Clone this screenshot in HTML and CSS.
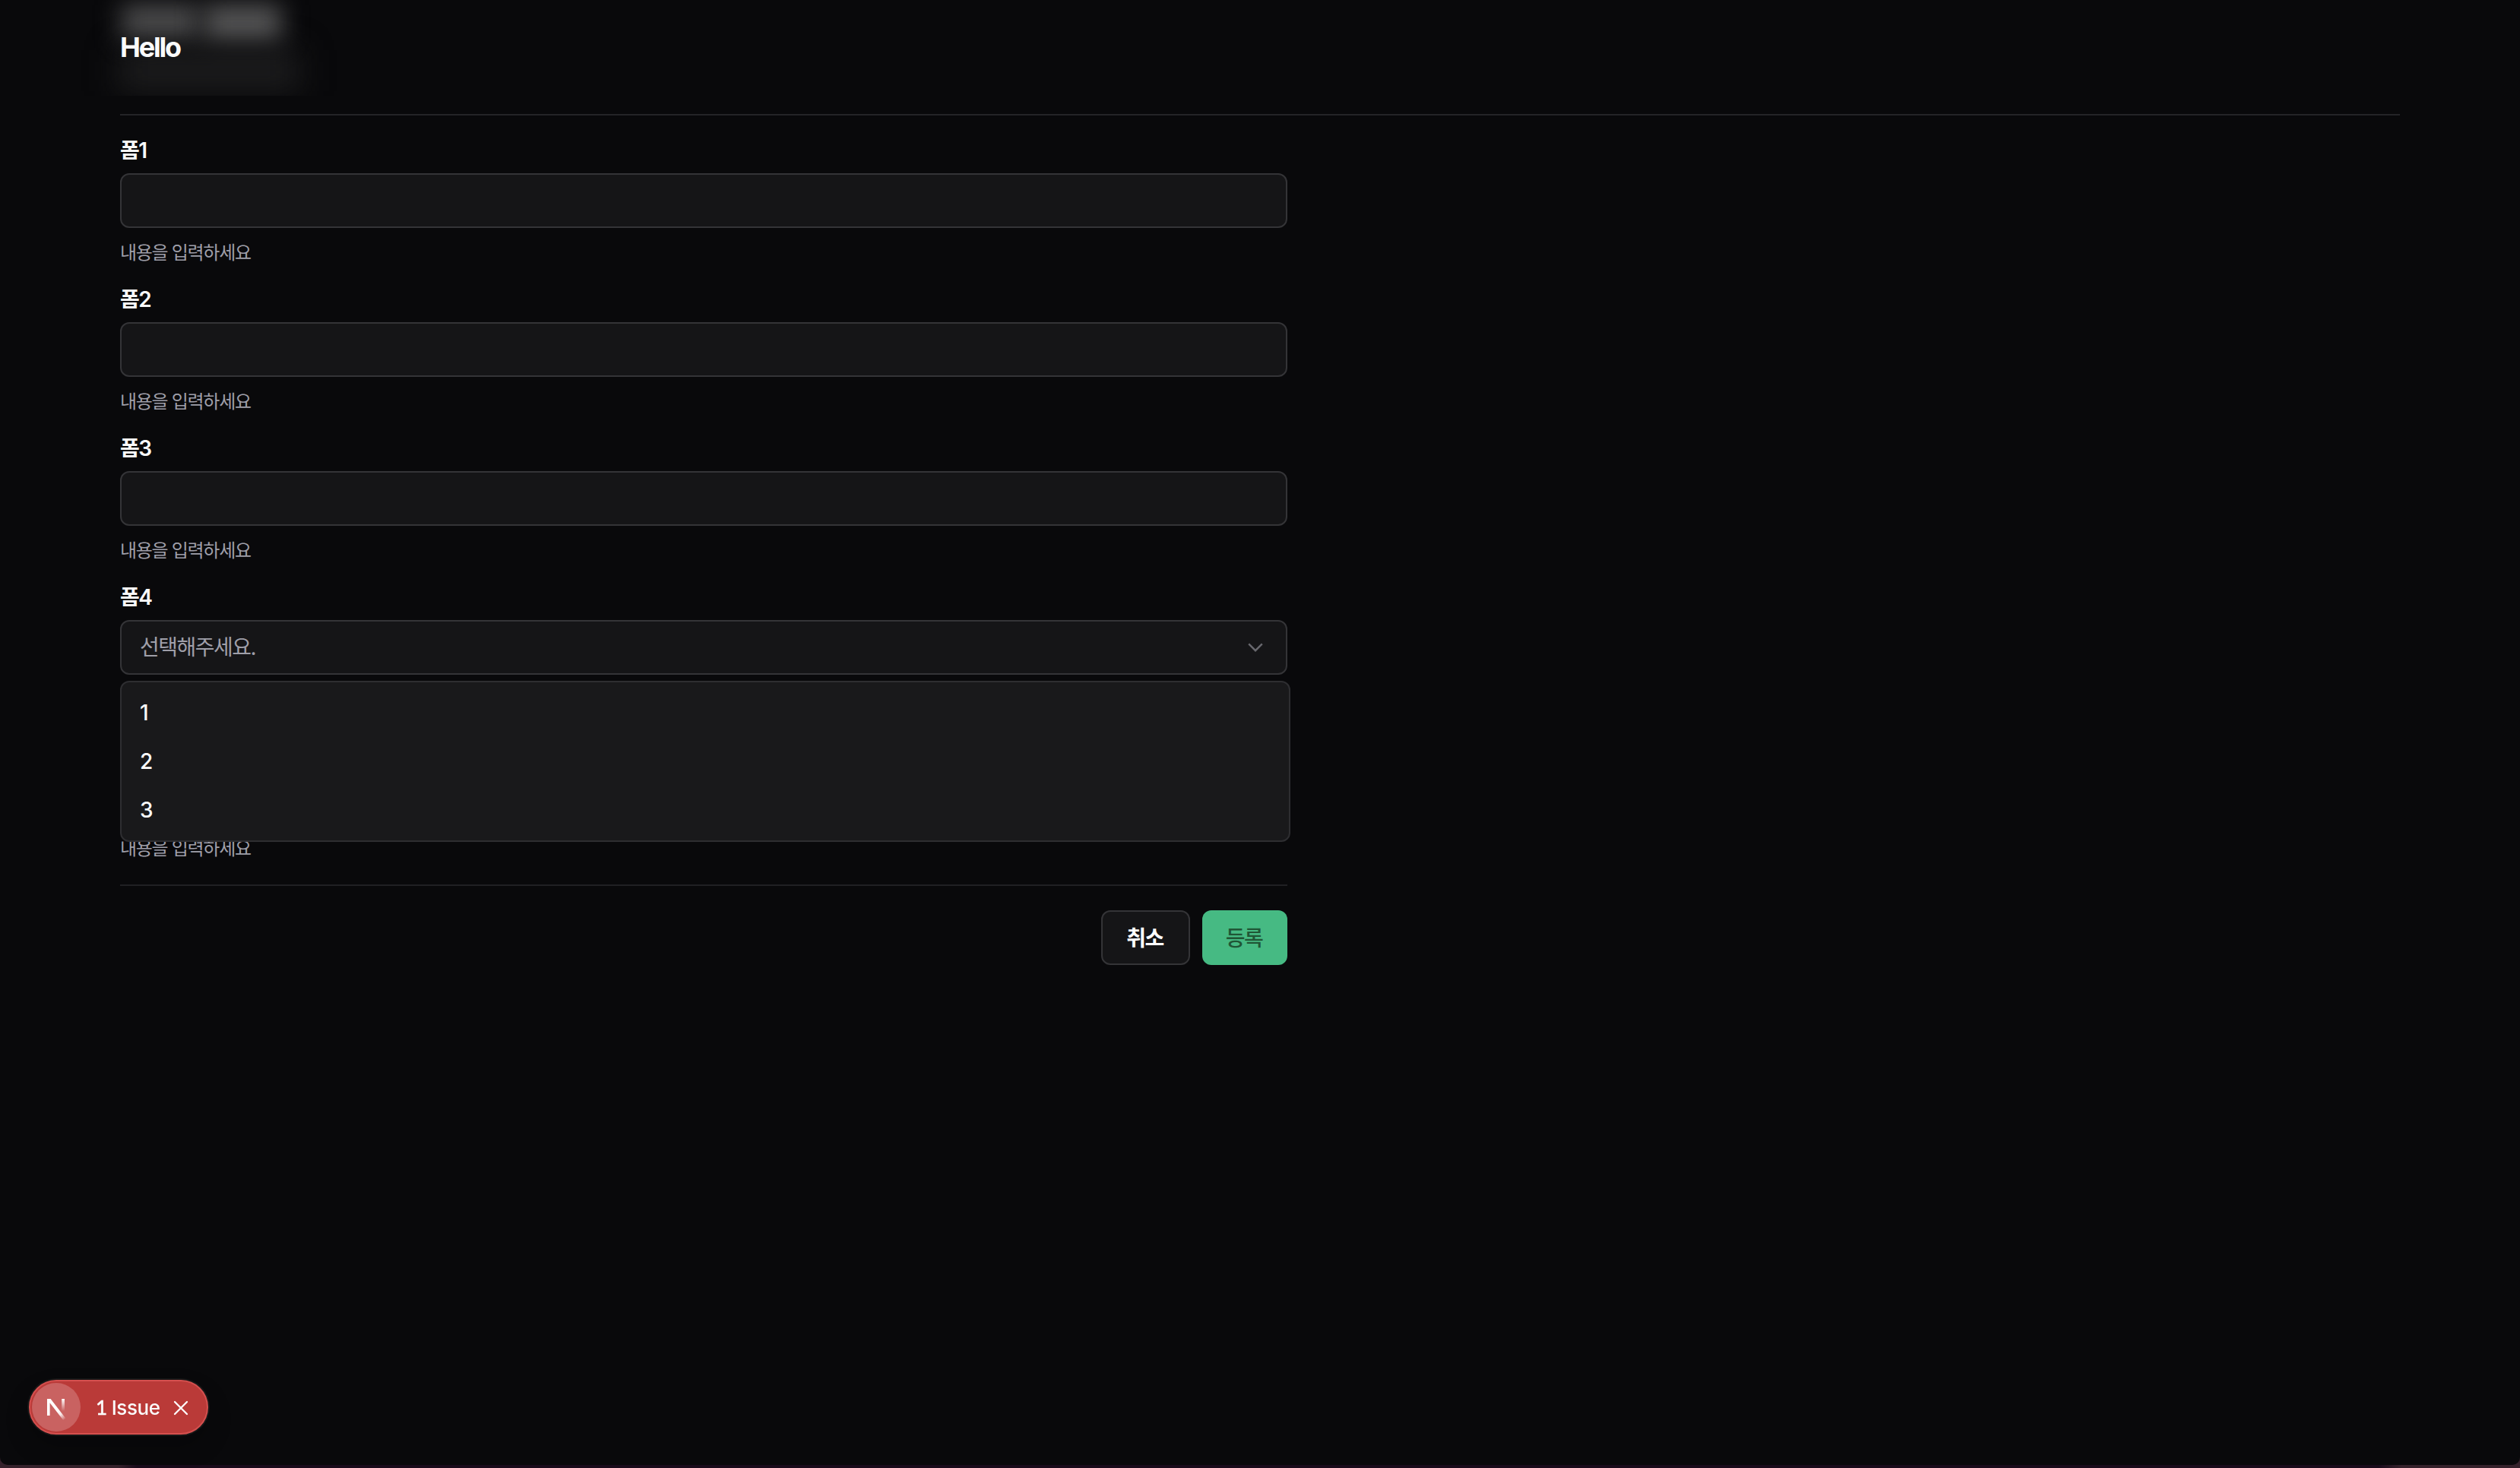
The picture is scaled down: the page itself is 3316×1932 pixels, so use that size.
FILE: index.html
```html
<!DOCTYPE html>
<html lang="ko">
<head>
<meta charset="utf-8">
<title>Hello</title>
<link rel="stylesheet" href="styles.css">
</head>
<body>
<div class="window">
  <header class="topbar">
    <div class="topbar-glow" aria-hidden="true">
      <i class="glow glow-word-a"></i><i class="glow glow-word-b"></i><i class="glow glow-line"></i>
    </div>
    <h1 class="brand">Hello</h1>
  </header>
  <main class="content">
    <hr class="divider">
    <form class="form">
      <div class="field">
        <label class="label" for="f1">폼1</label>
        <input class="control" id="f1" type="text">
        <p class="help">내용을 입력하세요</p>
      </div>
      <div class="field">
        <label class="label" for="f2">폼2</label>
        <input class="control" id="f2" type="text">
        <p class="help">내용을 입력하세요</p>
      </div>
      <div class="field">
        <label class="label" for="f3">폼3</label>
        <input class="control" id="f3" type="text">
        <p class="help">내용을 입력하세요</p>
      </div>
      <div class="field field-open">
        <span class="label">폼4</span>
        <div class="select">
          <div class="control select-trigger">
            <span class="placeholder">선택해주세요.</span>
            <svg class="chevron" width="20" height="12" viewBox="0 0 20 12"><path d="M1.2 1.4 10 10.2 18.8 1.4" fill="none" stroke="#68686e" stroke-width="2.4"/></svg>
          </div>
          <ul class="menu">
            <li class="option">1</li>
            <li class="option">2</li>
            <li class="option">3</li>
          </ul>
        </div>
        <p class="help">내용을 입력하세요</p>
      </div>
      <div class="actions">
        <button class="button cancel" type="button">취소</button>
        <button class="button submit" type="button">등록</button>
      </div>
    </form>
  </main>
</div>
<aside class="issue">
  <span class="issue-logo">
    <svg width="64" height="64" viewBox="0 0 64 64">
      <defs>
        <linearGradient id="diag" gradientUnits="userSpaceOnUse" x1="34" y1="37" x2="43" y2="49"><stop offset="0" stop-color="#fff"/><stop offset=".4" stop-color="#fff" stop-opacity=".85"/><stop offset="1" stop-color="#fff" stop-opacity="0"/></linearGradient>
        <linearGradient id="stem" gradientUnits="userSpaceOnUse" x1="0" y1="21" x2="0" y2="37"><stop offset="0" stop-color="#fff"/><stop offset="1" stop-color="#fff" stop-opacity="0"/></linearGradient>
      </defs>
      <path d="M20 21h4.6L44.3 46.6 41.2 49 23.6 26.2V43H20z" fill="url(#diag)"/>
      <path d="M39.2 21H43v16h-3.8z" fill="url(#stem)"/>
    </svg>
  </span>
  <span class="issue-text"><span class="issue-count">1</span> Issue</span>
  <svg class="issue-close" width="20" height="20" viewBox="0 0 20 20"><path d="M2 2l16 16M18 2 2 18" fill="none" stroke="#fff" stroke-width="2.3" stroke-linecap="round"/></svg>
</aside>
</body>
</html>
```
FILE: styles.css
```css
* { box-sizing: border-box; }
body {
  margin: 0;
  height: 1932px;
  overflow: hidden;
  padding-bottom: 4px;
  background: linear-gradient(90deg, #35212b 0, #35212b 155px, #190b1b 180px, #190b1b 3130px, #35212b 3160px);
  font-family: Inter, "Noto Sans CJK KR", sans-serif;
  color: #fafafa;
}
.window {
  height: 1928px;
  border-radius: 0 0 10px 10px;
  background: #09090b;
}
.topbar {
  position: relative;
  height: 126px;
  padding: 38px 158px 0;
  overflow: hidden;
}
.topbar-glow { position: absolute; inset: 0; }
.glow { position: absolute; filter: blur(16px); }
.glow-word-a { left: 160px; top: 6px; width: 102px; height: 46px; background: #4c4c4d; }
.glow-word-b { left: 268px; top: 6px; width: 102px; height: 50px; background: #555556; }
.glow-line { left: 156px; top: 66px; width: 238px; height: 54px; background: #1c1c1d; filter: blur(20px); }
.brand {
  position: relative;
  margin: 0;
  font-size: 36px;
  line-height: 48px;
  font-weight: 750;
  letter-spacing: -2.2px;
}
.content { padding: 24px 158px 0; }
.divider { margin: 0; border: 0; height: 2px; background: #242427; }
.form { width: 1536px; padding-top: 28px; }
.field { display: flex; flex-direction: column; height: 196px; }
.field-open { height: 392px; }
.field-open .select { padding-bottom: 196px; }
.label {
  height: 48px;
  line-height: 36px;
  font-size: 28px;
  font-weight: 600;
  letter-spacing: -1.5px;
}
.control {
  display: block;
  width: 100%;
  height: 72px;
  flex: none;
  border: 2px solid #343437;
  border-radius: 12px;
  background: #151517;
  outline: none;
}
.help {
  margin: 15px 0 0;
  height: 36px;
  line-height: 36px;
  font-size: 24px;
  letter-spacing: -1.3px;
  color: #9f9fa9;
}
.select { position: relative; }
.select-trigger {
  display: flex;
  align-items: center;
  justify-content: space-between;
  padding: 0 30px 0 24px;
}
.placeholder { font-size: 28px; line-height: 40px; letter-spacing: -1.5px; color: #9f9fa9; }
.menu {
  position: absolute;
  left: 0;
  top: 80px;
  z-index: 2;
  width: 1540px;
  height: 212px;
  margin: 0;
  padding: 8px 24px;
  list-style: none;
  border: 2px solid #2e2e31;
  border-radius: 12px;
  background: #19191b;
}
.option { height: 64px; line-height: 64px; font-size: 28px; font-weight: 500; }
.actions {
  display: flex;
  justify-content: flex-end;
  gap: 16px;
  margin-top: 4px;
  padding-top: 32px;
  border-top: 2px solid #202023;
}
.button {
  height: 72px;
  padding: 2px 2px 0 0;
  border-radius: 12px;
  font: 600 28px/40px Inter, "Noto Sans CJK KR", sans-serif;
  letter-spacing: -1.5px;
}
.cancel { width: 117px; border: 2px solid #343437; background: #151517; color: #fff; }
.submit { width: 112px; border: 0; background: #46ba83; color: #205636; font-weight: 500; }
.issue {
  position: fixed;
  left: 38px;
  bottom: 44px;
  display: flex;
  align-items: center;
  width: 236px;
  height: 72px;
  padding-left: 2px;
  border: 2px solid #d5504f;
  border-radius: 36px;
  background: #ba3a38;
  box-shadow: 0 0 0 2px #171717, 0 16px 32px rgba(0, 0, 0, .24);
}
.issue-logo { width: 64px; height: 64px; border-radius: 50%; background: #c96261; }
.issue-text {
  width: 104px;
  margin-left: 20px;
  font-size: 26px;
  line-height: 36px;
  font-weight: 500;
  letter-spacing: -.4px;
  white-space: nowrap;
}
.issue-count { font-family: Lato, sans-serif; letter-spacing: -1px; -webkit-text-stroke: .4px #fff; }
.issue-close { margin-top: 2px; margin-left: -2px; }
```
